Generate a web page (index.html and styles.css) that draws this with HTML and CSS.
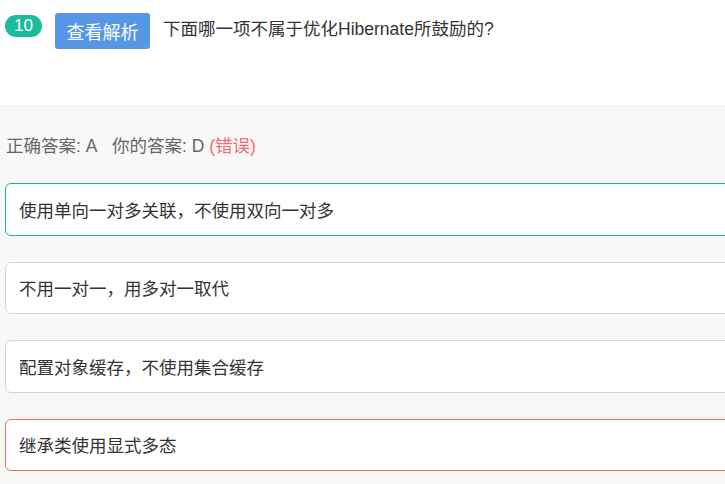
FILE: index.html
```html
<!DOCTYPE html>
<html lang="zh">
<head>
<meta charset="utf-8">
<link rel="stylesheet" href="styles.css">
</head>
<body>
<div class="page">
  <header class="q-head">
    <span class="q-num">10</span>
    <button class="q-btn">查看解析</button>
    <p class="q-title">下面哪一项不属于优化Hibernate所鼓励的?</p>
  </header>
  <section class="q-body">
    <p class="q-result">正确答案: A&nbsp;&nbsp;&nbsp;你的答案: D <span class="wrong">(错误)</span></p>
    <ul class="options">
      <li class="option correct">使用单向一对多关联，不使用双向一对多</li>
      <li class="option">不用一对一，用多对一取代</li>
      <li class="option">配置对象缓存，不使用集合缓存</li>
      <li class="option chosen-wrong">继承类使用显式多态</li>
    </ul>
  </section>
</div>
</body>
</html>
```
FILE: styles.css
```css
html, body {
  margin: 0;
  padding: 0;
  overflow: hidden;
  background: #f8f8f8;
}
body {
  font-family: "Liberation Sans", "Noto Sans CJK SC", sans-serif;
  font-size: 17.5px;
  color: #333;
}
.page {
  width: 725px;
  height: 484px;
  overflow: hidden;
}
.q-head {
  background: #fff;
  height: 107px;
  border-bottom: 1px solid #ebebeb;
  display: flex;
  align-items: flex-start;
  padding: 13px 0 0 5px;
  box-sizing: border-box;
}
.q-num {
  margin-top: 2px;
  width: 37px;
  height: 22px;
  border-radius: 11px;
  background: #1abc9c;
  color: #fff;
  font-size: 17px;
  line-height: 22px;
  text-align: center;
}
.q-btn {
  margin-left: 13px;
  width: 95px;
  height: 36px;
  border: none;
  border-radius: 3px;
  background: #5597e4;
  color: #fff;
  font-family: inherit;
  font-size: 18px;
  padding: 0;
}
.q-title {
  margin: 4px 0 0 13px;
  font-size: 17.5px;
  line-height: 24px;
  color: #333;
}
.q-body {
  padding: 27px 0 0 5px;
}
.q-result {
  margin: 0 0 0 1px;
  color: #666;
  line-height: 24px;
}
.wrong {
  color: #f56c6c;
}
.options {
  list-style: none;
  margin: 25px 0 0;
  padding: 0;
  width: 760px;
  display: flex;
  flex-direction: column;
  gap: 26px;
}
.option {
  height: 52.5px;
  box-sizing: border-box;
  border: 1px solid #d4d4d4;
  border-radius: 6px;
  background: #fff;
  padding-left: 13px;
  display: flex;
  align-items: center;
  color: #333;
}
.option.correct {
  border-color: #1fb28f;
}
.option.chosen-wrong {
  border-color: #f0705e;
}
```
